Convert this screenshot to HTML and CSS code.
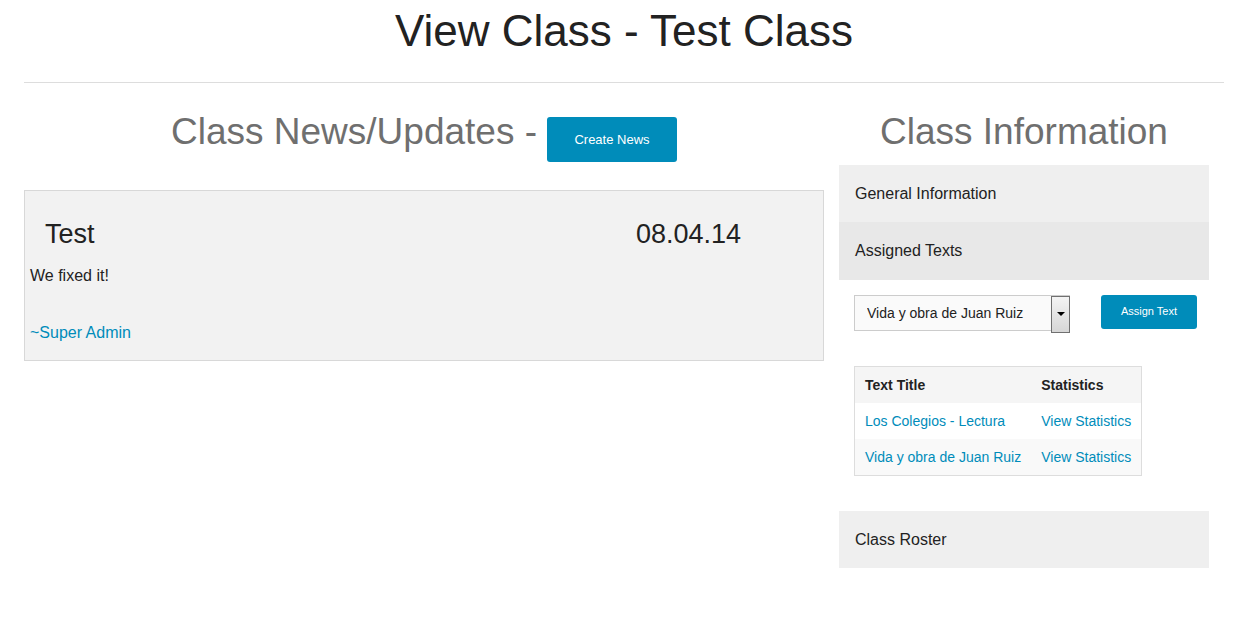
FILE: index.html
```html
<!DOCTYPE html>
<html>
<head>
<meta charset="utf-8">
<link rel="stylesheet" href="styles.css">
</head>
<body>
<div class="page">
  <h1 class="title">View Class - Test Class</h1>
  <hr class="rule">
  <div class="row">
    <div class="col-main">
      <div class="news-head">
        <h2 class="section-title">Class News/Updates -</h2>
        <a class="btn btn-small" href="#">Create News</a>
      </div>
      <div class="panel">
        <div class="news-top">
          <h3 class="news-title">Test</h3>
          <h3 class="news-date">08.04.14</h3>
        </div>
        <p class="news-body">We fixed it!</p>
        <a class="news-author" href="#">~Super Admin</a>
      </div>
    </div>
    <div class="col-side">
      <h2 class="section-title side-title">Class Information</h2>
      <div class="accordion">
        <div class="acc-item">
          <div class="acc-title">General Information</div>
        </div>
        <div class="acc-item active">
          <div class="acc-title">Assigned Texts</div>
          <div class="acc-content">
            <div class="assign-row">
              <div class="select-wrap">
                <select class="text-select">
                  <option>Vida y obra de Juan Ruiz</option>
                  <option>Los Colegios - Lectura</option>
                </select>
              </div>
              <a class="btn btn-tiny" href="#">Assign Text</a>
            </div>
            <table class="texts">
              <thead>
                <tr><th>Text Title</th><th>Statistics</th></tr>
              </thead>
              <tbody>
                <tr><td><a href="#">Los Colegios - Lectura</a></td><td><a href="#">View Statistics</a></td></tr>
                <tr class="even"><td><a href="#">Vida y obra de Juan Ruiz</a></td><td><a href="#">View Statistics</a></td></tr>
              </tbody>
            </table>
          </div>
        </div>
        <div class="acc-item">
          <div class="acc-title">Class Roster</div>
        </div>
      </div>
    </div>
  </div>
</div>
</body>
</html>
```

FILE: styles.css
```css
* { box-sizing: border-box; }
html, body { margin: 0; padding: 0; background: #fff; }
body {
  font-family: "Liberation Sans", Arial, Helvetica, sans-serif;
  color: #222;
  font-size: 16px;
}
a { color: #008cba; text-decoration: none; }

.page {
  width: 1200px;
  margin-left: 24px;
}

.title {
  margin: 0;
  padding-top: 4px;
  font-size: 44px;
  font-weight: normal;
  line-height: 53px;
  text-align: center;
  color: #222;
}

.rule {
  margin: 25px 0 0;
  border: 0;
  border-top: 1px solid #dddddd;
  height: 0;
}

.row {
  display: grid;
  grid-template-columns: 800px 400px;
}

.section-title {
  margin: 0;
  font-size: 37px;
  font-weight: normal;
  line-height: 46px;
  color: #6f6f6f;
}

.news-head {
  display: flex;
  justify-content: center;
  align-items: baseline;
  gap: 10px;
  padding-top: 26px;
}

.btn {
  display: inline-block;
  background: #008cba;
  color: #fff;
  border-radius: 3px;
  white-space: nowrap;
  text-align: center;
  flex-shrink: 0;
  font-family: "Liberation Sans", Arial, sans-serif;
}
.btn-small {
  font-size: 13px;
  line-height: 15px;
  padding: 15px 0;
  width: 130px;
}
.btn-tiny {
  font-size: 11px;
  line-height: 13px;
  padding: 10px 0 11px;
  width: 96px;
}

.panel {
  margin-top: 28px;
  background: #f2f2f2;
  border: 1px solid #d8d8d8;
  padding: 24px 5px 15px;
}
.news-top {
  display: grid;
  grid-template-columns: 3fr 1fr;
}
.news-title, .news-date {
  margin: 0;
  padding: 0 15px;
  font-size: 27px;
  font-weight: normal;
  line-height: 38px;
  color: #222;
}
.news-body {
  margin: 11px 0 0;
  line-height: 24px;
}
.news-author {
  display: block;
  margin-top: 33px;
  line-height: 24px;
}

.col-side {
  padding: 0 15px;
}
.side-title {
  text-align: center;
  padding-top: 26px;
  margin-bottom: 10px;
}

.acc-title {
  background: #efefef;
  padding: 16px 16px;
  line-height: 25px;
  font-size: 16px;
  color: #222;
}
.acc-item.active .acc-title {
  background: #e8e8e8;
  padding-bottom: 17px;
}
.acc-content {
  padding: 15px 15px 16px;
}
.assign-row {
  display: flex;
  align-items: flex-start;
  gap: 31px;
}
.select-wrap {
  position: relative;
  flex-shrink: 0;
  width: 216px;
  height: 36px;
}
.text-select {
  -webkit-appearance: none;
  appearance: none;
  width: 216px;
  height: 36px;
  border: 1px solid #cccccc;
  background: #fafafa;
  color: #222;
  font-family: "Liberation Sans", Arial, sans-serif;
  font-size: 14px;
  padding: 0 24px 0 12px;
  margin: 0;
  border-radius: 0;
  outline: none;
}
.select-wrap::after {
  content: "";
  position: absolute;
  top: 1px;
  right: 0;
  width: 17px;
  height: 35px;
  border: 1px solid #707070;
  background: linear-gradient(#f4f4f4, #d6d6d6);
  pointer-events: none;
}
.select-wrap::before {
  content: "";
  position: absolute;
  top: 17px;
  right: 5px;
  width: 0;
  height: 0;
  border-left: 4px solid transparent;
  border-right: 4px solid transparent;
  border-top: 4px solid #000;
  z-index: 1;
  pointer-events: none;
}

.texts {
  margin-top: 35px;
  border-collapse: collapse;
  border: 1px solid #dddddd;
  font-size: 14px;
}
.texts th {
  background: #f5f5f5;
  text-align: left;
  font-weight: bold;
  color: #222;
  padding: 9px 10px;
  line-height: 18px;
}
.texts td {
  padding: 9px 10px;
  line-height: 18px;
  background: #fff;
}
.texts tr.even td { background: #f9f9f9; }

.acc-item:last-child { margin-top: 19px; }
```
